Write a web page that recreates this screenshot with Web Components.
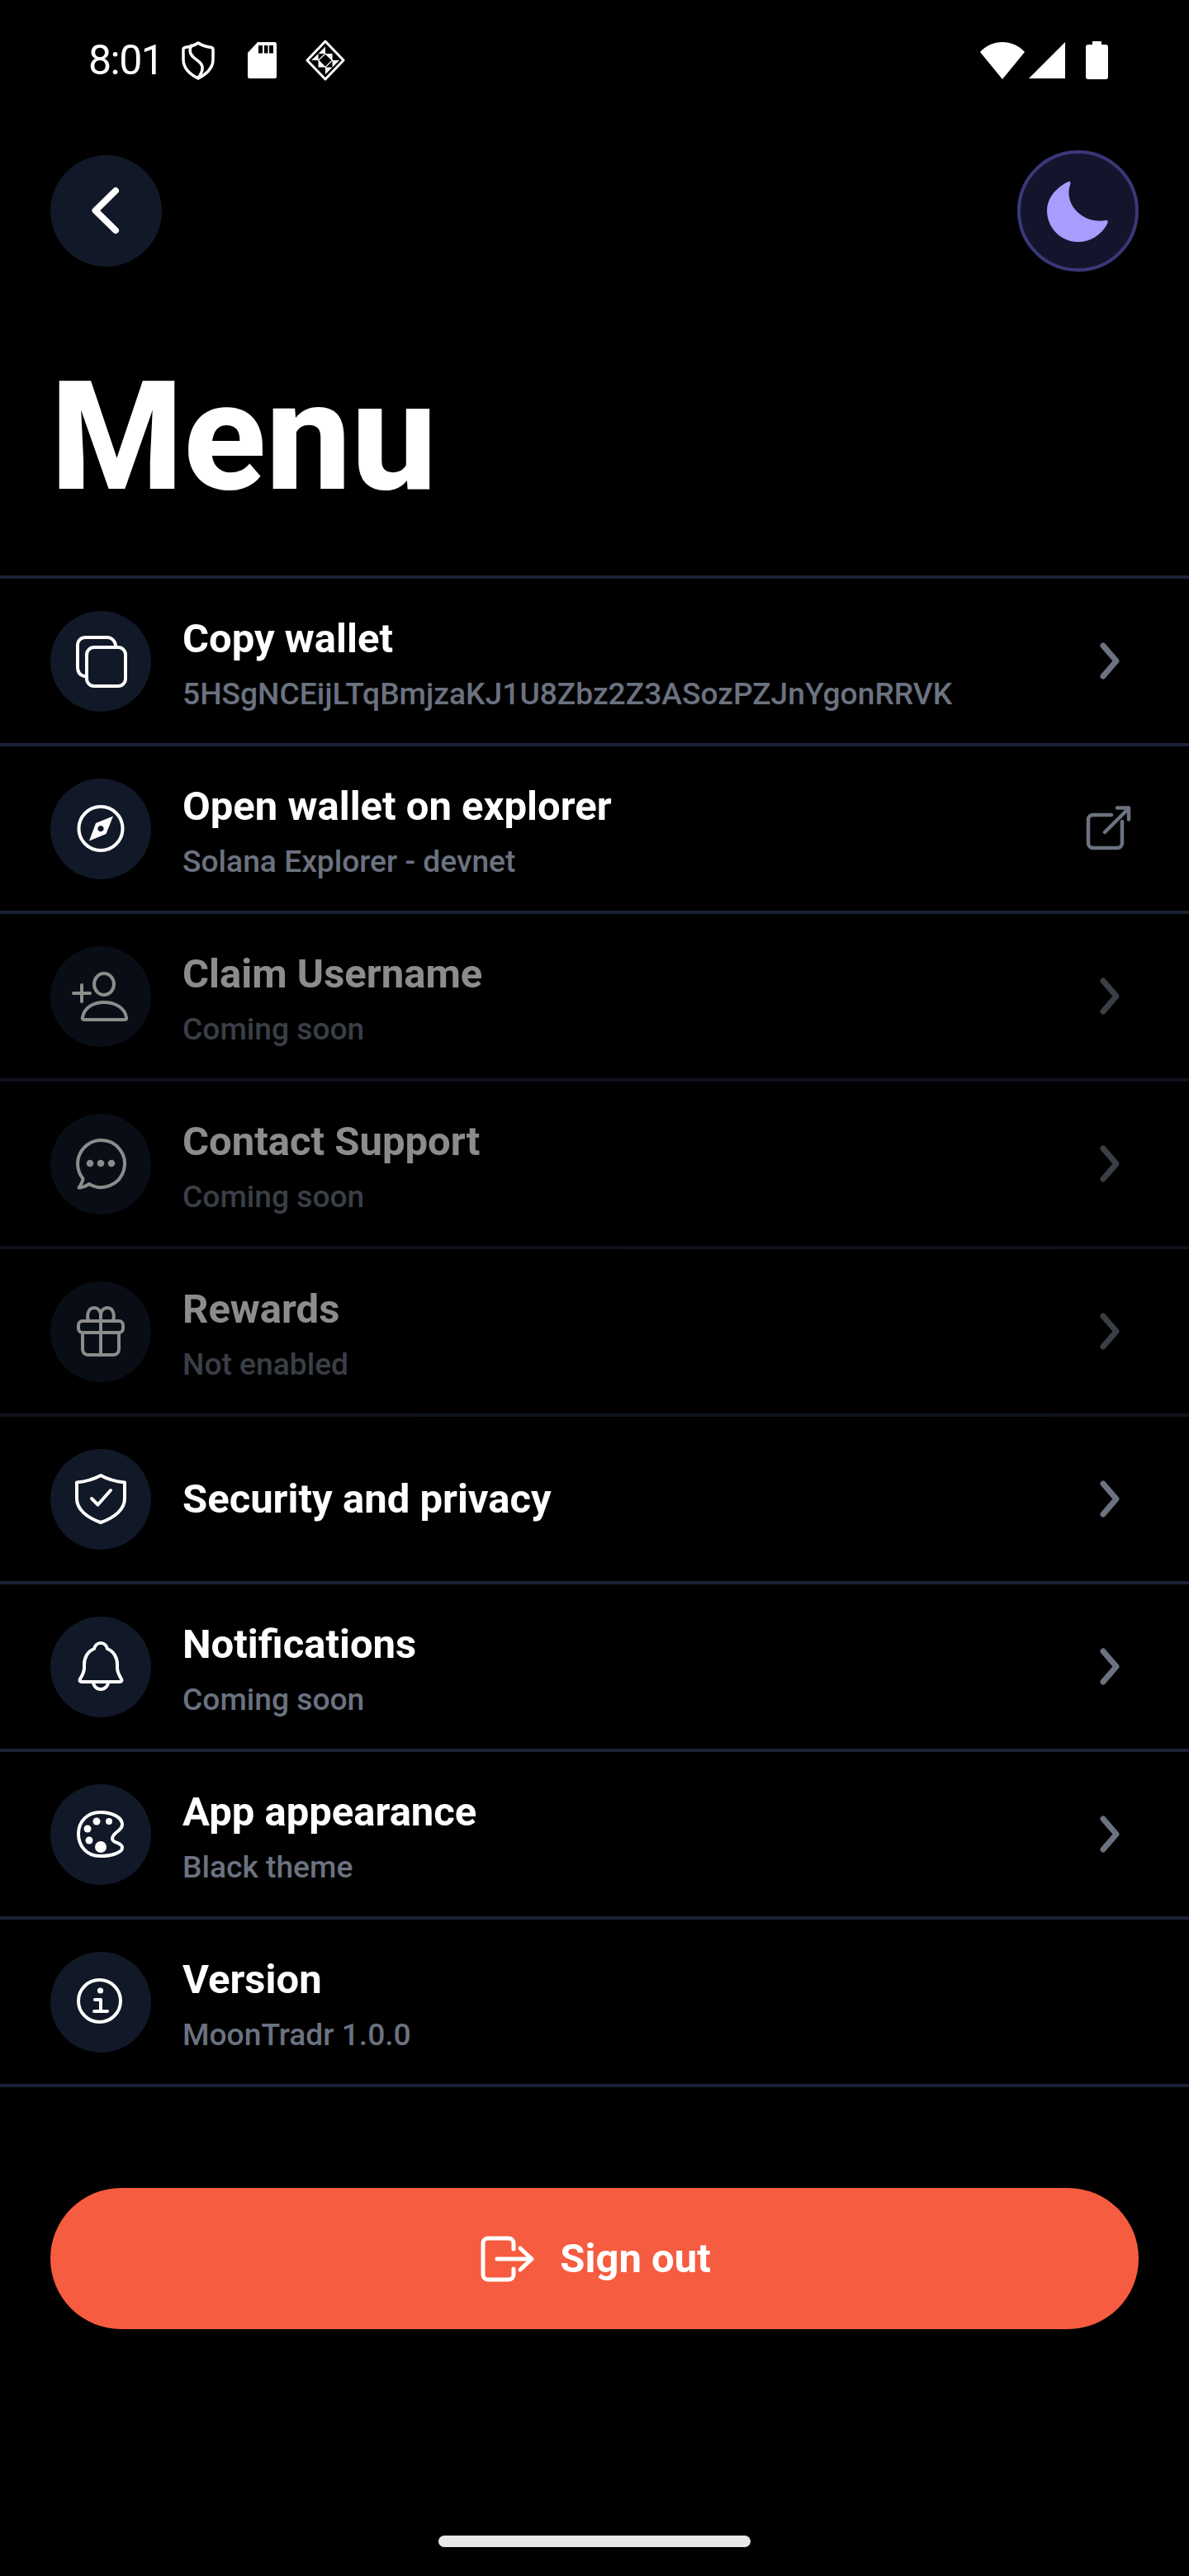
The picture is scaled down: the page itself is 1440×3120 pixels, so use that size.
<!DOCTYPE html>
<html>
<head>
<meta charset="utf-8">
<title>Menu</title>
<style>
  html, body { margin: 0; background: #000; }
  body { font-family: Roboto, "Liberation Sans", sans-serif; color: #fff; }
</style>
</head>
<body>
<menu-screen>
  <status-bar></status-bar>
  <top-bar></top-bar>
  <page-title>Menu</page-title>
  <menu-list>
    <menu-row icon="copy" title="Copy wallet" sub="5HSgNCEijLTqBmjzaKJ1U8Zbz2Z3ASozPZJnYgonRRVK"></menu-row>
    <menu-row icon="compass" title="Open wallet on explorer" sub="Solana Explorer - devnet" trailing="external"></menu-row>
    <menu-row icon="useradd" title="Claim Username" sub="Coming soon" disabled></menu-row>
    <menu-row icon="chat" title="Contact Support" sub="Coming soon" disabled></menu-row>
    <menu-row icon="gift" title="Rewards" sub="Not enabled" disabled></menu-row>
    <menu-row icon="shield" title="Security and privacy"></menu-row>
    <menu-row icon="bell" title="Notifications" sub="Coming soon"></menu-row>
    <menu-row icon="palette" title="App appearance" sub="Black theme"></menu-row>
    <menu-row icon="info" title="Version" sub="MoonTradr 1.0.0" trailing="none"></menu-row>
  </menu-list>
  <sign-out-button>Sign out</sign-out-button>
  <home-indicator></home-indicator>
</menu-screen>

<script>
// row icons, drawn on the 122x122 circle
const ROW_ICONS = {
  copy: `<rect x="44" y="44" width="47" height="47" rx="9"/>
    <path d="M79 41C78 36 74 32 69 32H43C37 32 33 36 33 42V68C33 74 36 78 41 79"/>`,
  compass: `<circle cx="61" cy="60.5" r="26.5"/>
    <path class="fill" fill-rule="evenodd" d="M76 45.5L67.5 67 47 75.5 55 54ZM61 57a3.6 3.6 0 1 0 .01 0Z"/>`,
  useradd: `<ellipse cx="65" cy="46" rx="12" ry="13"/>
    <path d="M41 89H90C92 89 92.500 88 92 86 90 75 79 68 65 68 51 68 41 75 39 86 38.500 88 39 89 41 89Z"/>
    <path d="M28 57H48M38 47V67"/>`,
  chat: `<path d="M61.500 32A28.500 28.500 0 0 0 39.500 78.500C39 82 37 86 34.500 89.500 39 89.500 43 87.500 47 85A28.500 28.500 0 1 0 61.500 32Z"/>
    <circle class="fill" cx="48" cy="60" r="4.300"/><circle class="fill" cx="61" cy="60" r="4.300"/><circle class="fill" cx="74" cy="60" r="4.300"/>`,
  gift: `<rect x="34" y="48" width="54" height="14" rx="5"/>
    <path d="M39 62V82C39 86 42 89 46 89H76C80 89 83 86 83 82V62M61 48V89"/>
    <path d="M46.500 48C43.500 42 45.500 32 53 32 58 32 61 36 61 42V48M75.500 48C78.500 42 76.500 32 69 32 64 32 61 36 61 42"/>`,
  shield: `<path d="M61 32C70 37 80 39.500 90 40.500V60C90 73 78 83 61 89 44 83 32 73 32 60V40.500C42 39.500 52 37 61 32Z"/>
    <path d="M50 60L57.500 67.500 73 50"/>`,
  bell: `<path d="M61 32C57 32 54 35 53 39 45 42 41 50 41 58V62C41 68 38 72 36 75.500 35 78 36 79 38 79H84C86 79 87 78 86 75.500 84 72 81 68 81 62V58C81 50 77 42 69 39 68 35 65 32 61 32Z"/>
    <path d="M52 79A9 9 0 0 0 70 79"/>`,
  palette: `<path d="M60 34C75 34 87 40 87 49 87 57 75 58 75 66 75 72 87 70 87 77 87 83 74 87 60 87 44 87 34 75 34 60 34 45 45 34 60 34Z"/>
    <circle class="fill" cx="56" cy="45" r="4.500"/><circle class="fill" cx="71" cy="45" r="4"/><circle class="fill" cx="45" cy="54" r="4.500"/><circle class="fill" cx="47" cy="68" r="4.500"/><circle class="fill" cx="61" cy="76" r="7"/>`,
  info: `<circle cx="59.500" cy="59.500" r="25.500"/>
    <circle class="fill" cx="60.500" cy="47" r="3.600"/>
    <path d="M54 58H61V72M53 72H69"/>`
};

class StatusBar extends HTMLElement {
  constructor() {
    super();
    this.attachShadow({ mode: "open" });
    this.shadowRoot.innerHTML = `
      <style>
        :host { display: flex; align-items: center; height: 146px; padding: 0 98px 0 107px; box-sizing: border-box; }
        .time { font: 400 50px/1 Roboto, sans-serif; letter-spacing: -1.500px; width: 113px; }
        svg { display: block; fill: #fff; flex: none; }
        .spacer { flex: 1; }
      </style>
      <span class="time">8:01</span>
      <svg width="40" height="47" viewBox="0 0 40 47" style="fill:none">
        <path d="M20 2C24 5 30 6.500 36 7.500 37.500 8 38 9 38 10V22C38 32 30 40 20 45 10 40 2 32 2 22V10C2 9 2.500 8 4 7.500 10 6.500 16 5 20 2Z" stroke="#fff" stroke-width="3.500" stroke-linejoin="round"/>
        <path d="M13 4C9 9 9 15 15 20 20 24 26 27 25 34 24.500 38 22 42 19 45" stroke="#fff" stroke-width="3.500"/>
      </svg>
      <svg width="35" height="44" viewBox="0 0 35 44" style="margin-left:40px">
        <path d="M12 0H33C34 0 35 1 35 2V42C35 43 34 44 33 44H2C1 44 0 43 0 42V13ZM13 4V13.500H18V4ZM20 4V13.500H24.500V4ZM26 4V13.500H31V4Z" fill-rule="evenodd"/>
      </svg>
      <svg width="48" height="50" viewBox="0 0 48 50" style="margin-left:35px">
        <path d="M24 2L46 25 24 48 2 25Z" fill="none" stroke="#fff" stroke-width="3" stroke-linejoin="round"/>
        <path d="M24 8.500V17H15.500ZM24 17H32.500V25.500ZM7 25H15.500V17ZM32.500 25H41L32.500 33.500ZM15.500 25L24 33.500H15.500ZM24 33.500H32.500L24 42Z"/>
        <path d="M24 17L15.500 25 24 33.500 32.500 25Z" fill="none" stroke="#fff" stroke-width="1.200"/>
      </svg>
      <span class="spacer"></span>
      <svg width="54" height="45" viewBox="0 0 54 45">
        <path d="M0 12C7 4 17 0 27 0 37 0 47 4 54 12L27 45Z"/>
      </svg>
      <svg width="44" height="44" viewBox="0 0 44 44" style="margin-left:5px">
        <path d="M44 0V44H0Z"/>
      </svg>
      <svg width="27" height="46" viewBox="0 0 27 46" style="margin-left:25px">
        <path d="M8 0H19V4H24C26 4 27 5 27 7V43C27 45 26 46 24 46H3C1 46 0 45 0 43V7C0 5 1 4 3 4H8Z"/>
      </svg>
    `;
  }
}

class TopBar extends HTMLElement {
  constructor() {
    super();
    this.attachShadow({ mode: "open" });
    this.shadowRoot.innerHTML = `
      <style>
        :host { display: flex; align-items: center; justify-content: space-between; height: 218px; padding: 0 61px; }
        .back { width: 135px; height: 135px; border-radius: 50%; background: #111827; }
        .theme { width: 147px; height: 147px; box-sizing: border-box; border-radius: 50%; background: #14152d; border: 4px solid #3a3878; }
        svg { display: block; }
      </style>
      <div class="back">
        <svg width="135" height="135" viewBox="0 0 135 135" fill="none">
          <path d="M79 43L54.500 67 79 91" stroke="#fff" stroke-width="8" stroke-linecap="round" stroke-linejoin="round"/>
        </svg>
      </div>
      <div class="theme">
        <svg width="139" height="139" viewBox="0 0 139 139">
          <path d="M58 34C60 33 61 35 60 38 56 50 60 62 69 71 78 79 89 83 102 81 105 80 107 82 105 85 98 99 84 107 70 107 49 107 32 90 32 69 32 54 43 41 58 34Z" fill="#a99cff"/>
        </svg>
      </div>
    `;
  }
}

class PageTitle extends HTMLElement {
  constructor() {
    super();
    this.attachShadow({ mode: "open" });
    this.shadowRoot.innerHTML = `
      <style>
        :host { display: block; height: 333px; padding-left: 61px; font: 800 184px/331px Roboto, sans-serif; color: #fff; }
      </style>
      <slot></slot>
    `;
  }
}

class MenuList extends HTMLElement {
  constructor() {
    super();
    this.attachShadow({ mode: "open" });
    this.shadowRoot.innerHTML = `
      <style>
        :host { display: flex; flex-direction: column; border-top: 4px solid #1a2236; }
      </style>
      <slot></slot>
    `;
  }
}

class MenuRow extends HTMLElement {
  constructor() {
    super();
    this.attachShadow({ mode: "open" });
  }

  connectedCallback() {
    const sub = this.getAttribute("sub");
    const trailing = this.getAttribute("trailing") || "chevron";
    let end = "";
    if (trailing === "chevron") {
      end = `<svg width="70" height="70" viewBox="0 0 70 70" class="end"><path stroke-width="7" d="M31 16L47 34.500 31 53"/></svg>`;
    } else if (trailing === "external") {
      end = `<svg width="70" height="70" viewBox="0 0 70 70" class="end"><path stroke-width="4.500" d="M41 18H19C15.500 18 13 20.500 13 24V52C13 55.500 15.500 58 19 58H48C51.500 58 54 55.500 54 52V26M33 39L62 10M48 9.500H62V23.500"/></svg>`;
    }
    this.shadowRoot.innerHTML = `
      <style>
        :host { display: flex; align-items: center; height: 199px; padding: 0 65px 0 61px; border-bottom: 4px solid #1a2236; }
        :host([disabled]) { opacity: 0.55; }
        :host([sub]) .title { margin-top: 2px; }
        .icon { flex: none; width: 122px; height: 122px; border-radius: 50%; background: #111827; }
        .icon svg { display: block; fill: none; stroke: #fff; stroke-width: 4; stroke-linecap: round; stroke-linejoin: round; }
        .icon svg .fill { fill: #fff; stroke: none; }
        .text { flex: 1; min-width: 0; margin-left: 38px; }
        .title { font: 700 49px/58px Roboto, sans-serif; color: #fff; }
        .sub { font: 500 37.200px/38px Roboto, sans-serif; color: #6b7280; margin-top: 18px; white-space: nowrap; }
        .end { flex: none; fill: none; stroke: #6b7280; stroke-linecap: round; stroke-linejoin: round; }
      </style>
      <div class="icon"><svg width="122" height="122" viewBox="0 0 122 122">${ROW_ICONS[this.getAttribute("icon")]}</svg></div>
      <div class="text">
        <div class="title">${this.getAttribute("title")}</div>
        ${sub ? `<div class="sub">${sub}</div>` : ""}
      </div>
      ${end}
    `;
  }
}

class SignOutButton extends HTMLElement {
  constructor() {
    super();
    this.attachShadow({ mode: "open" });
    this.shadowRoot.innerHTML = `
      <style>
        :host { display: flex; align-items: center; justify-content: center; gap: 29px; height: 171px; margin: 122px 61px 0; border-radius: 86px; background: #f65c3f; color: #fff; font: 700 49px/1 Roboto, sans-serif; }
        svg { display: block; fill: none; stroke: #fff; stroke-width: 5; stroke-linecap: round; stroke-linejoin: round; }
      </style>
      <svg width="70" height="60" viewBox="0 0 70 60">
        <path d="M43 18V11C43 7.500 40.500 5 37 5H12C8.500 5 6 7.500 6 11V49C6 52.500 8.500 55 12 55H37C40.500 55 43 52.500 43 49V42"/>
        <path d="M23 30H65M51 17L65 30 51 43"/>
      </svg>
      <slot></slot>
    `;
  }
}

class HomeIndicator extends HTMLElement {
  constructor() {
    super();
    this.attachShadow({ mode: "open" });
    this.shadowRoot.innerHTML = `
      <style>
        :host { display: flex; justify-content: center; margin-top: auto; padding-bottom: 35px; }
        div { width: 378px; height: 14px; border-radius: 7px; background: #e8e8e8; }
      </style>
      <div></div>
    `;
  }
}

class MenuScreen extends HTMLElement {
  constructor() {
    super();
    this.attachShadow({ mode: "open" });
    this.shadowRoot.innerHTML = `
      <style>
        :host { display: flex; flex-direction: column; width: 1440px; height: 3120px; background: #000; overflow: hidden; }
      </style>
      <slot></slot>
    `;
  }
}

customElements.define("status-bar", StatusBar);
customElements.define("top-bar", TopBar);
customElements.define("page-title", PageTitle);
customElements.define("menu-list", MenuList);
customElements.define("menu-row", MenuRow);
customElements.define("sign-out-button", SignOutButton);
customElements.define("home-indicator", HomeIndicator);
customElements.define("menu-screen", MenuScreen);
</script>
</body>
</html>
